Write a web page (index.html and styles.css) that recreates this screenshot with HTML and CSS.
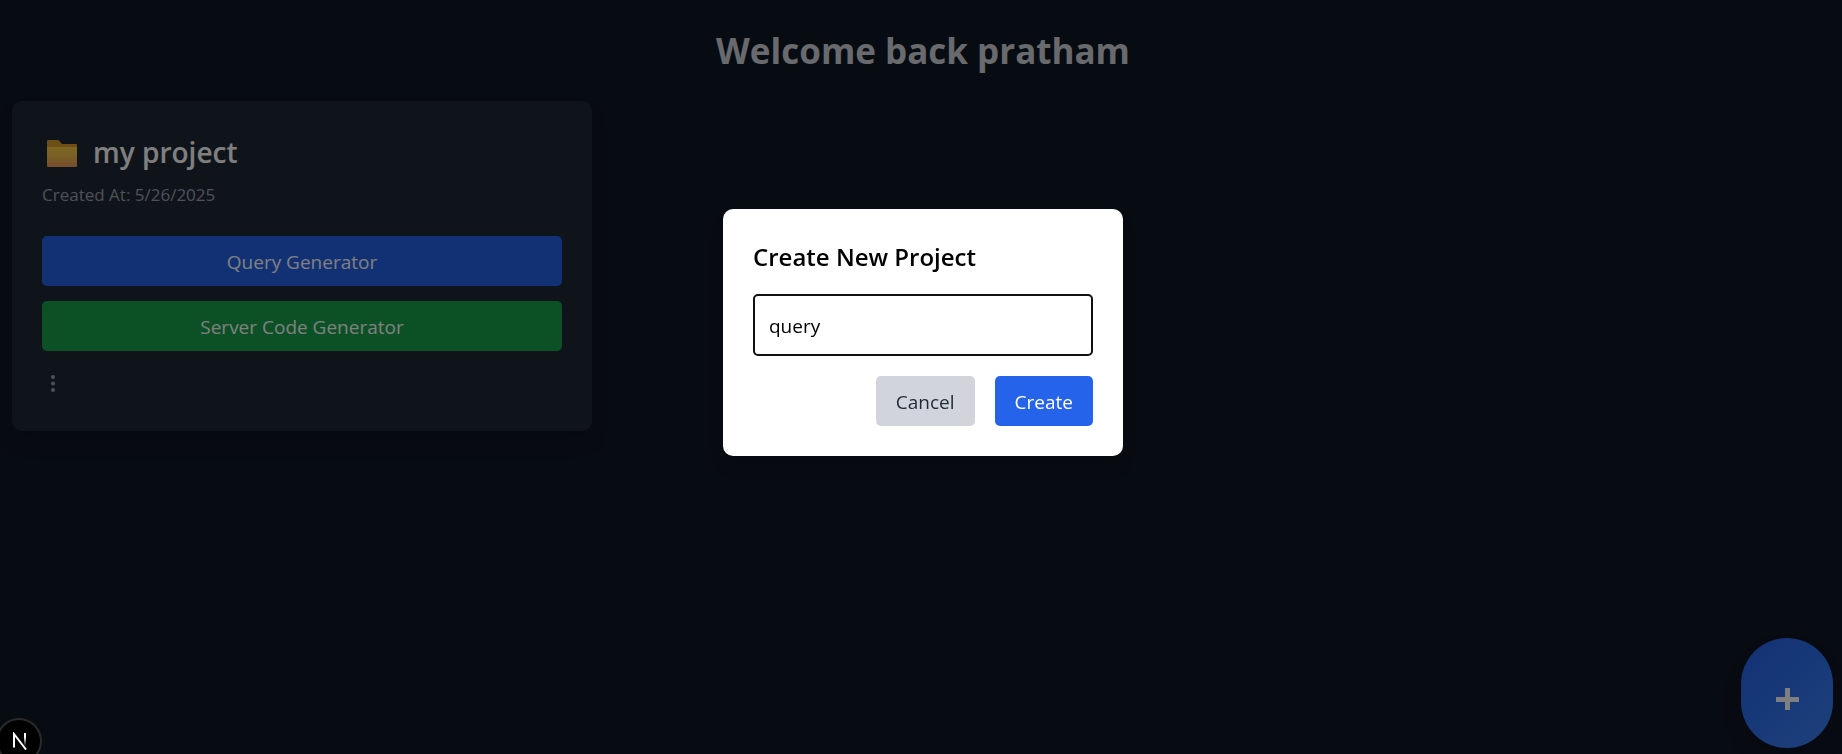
FILE: index.html
```html
<!DOCTYPE html>
<html lang="en">
<head>
<meta charset="utf-8">
<title>Projects</title>
<meta name="viewport" content="width=device-width, initial-scale=1">
<link rel="stylesheet" href="styles.css">
</head>
<body>
<main class="page">
  <h1 class="welcome">Welcome back pratham</h1>
  <section class="projects">
    <article class="card">
      <div class="card-head">
        <svg class="folder" viewBox="0 0 30 27" aria-hidden="true">
          <defs>
            <linearGradient id="folder-front" x1="0" y1="0" x2="0" y2="1">
              <stop offset="0" stop-color="#f7cf45"/>
              <stop offset="0.5" stop-color="#f2bd4c"/>
              <stop offset="1" stop-color="#eb9a62"/>
            </linearGradient>
          </defs>
          <path d="M0 1Q0 0 1 0H10.500Q11.500 0 12.200 .8L15 4H29Q30 4 30 5V26H0Z" fill="#dc9c2e"/>
          <path d="M0 7H30V26Q30 27 29 27H1Q0 27 0 26Z" fill="url(#folder-front)"/>
        </svg>
        <h2 class="card-title">my project</h2>
      </div>
      <p class="created">Created At: 5/26/2025</p>
      <div class="card-actions">
        <button class="btn btn-query" type="button">Query Generator</button>
        <button class="btn btn-server" type="button">Server Code Generator</button>
      </div>
      <button class="more" type="button" aria-label="More options">
        <svg class="dots" viewBox="0 0 4 17" aria-hidden="true"><circle cx="2" cy="2" r="2"/><circle cx="2" cy="8.500" r="2"/><circle cx="2" cy="15" r="2"/></svg>
      </button>
    </article>
  </section>
</main>
<button class="fab" type="button" aria-label="Add project">
  <svg class="plus" viewBox="0 0 23 22" aria-hidden="true"><path d="M0 11.500H23M11.500 0V22"/></svg>
</button>
<div class="overlay">
  <form class="modal" role="dialog" aria-labelledby="modal-title">
    <h2 class="modal-title" id="modal-title">Create New Project</h2>
    <input class="name" type="text" value="query" aria-label="Project name">
    <div class="modal-actions">
      <button class="btn btn-cancel" type="button">Cancel</button>
      <button class="btn btn-create" type="button">Create</button>
    </div>
  </form>
</div>
<button class="dev" type="button" aria-label="Developer tools">
  <svg class="dev-mark" viewBox="0 0 16 18" aria-hidden="true">
    <defs>
      <linearGradient id="fade" x1="0" y1="0" x2="0" y2="1"><stop offset="0.3" stop-color="#fff"/><stop offset="1" stop-color="#fff" stop-opacity="0"/></linearGradient>
    </defs>
    <path d="M2 15.500V2L14 17.500" fill="none" stroke="#fff" stroke-width="2"/>
    <rect x="12" y="1" width="2" height="13" fill="url(#fade)"/>
  </svg>
</button>
</body>
</html>
```
FILE: styles.css
```css
* { box-sizing: border-box; margin: 0; }

body {
  min-height: 100vh;
  background: #0f1724;
  color: #fff;
  font: 20px/30px "Segoe UI", "Open Sans", sans-serif;
}

button, input { font: inherit; color: inherit; border: 0; }

.page { padding: 26px 8px 26px 12px; }

.welcome {
  margin-bottom: 25px;
  color: #d1d5db;
  font-size: 35px;
  line-height: 50px;
  font-weight: 700;
  text-align: center;
}

.projects {
  display: grid;
  grid-template-columns: repeat(3, 1fr);
  gap: 41px;
}

.card {
  padding: 30px;
  border-radius: 10px;
  background: #1f2937;
  box-shadow: 0 12px 18px rgba(0, 0, 0, .1);
}

.card-head { display: flex; align-items: center; gap: 16px; padding-left: 5px; }
.folder { width: 30px; height: 27px; margin-top: 2px; }
.card-title { font-size: 28px; line-height: 42px; font-weight: 600; }
.created { margin-bottom: 26px; padding-top: 7px; color: #9ca3af; font-size: 17px; }

.card-actions { display: grid; gap: 15px; }

.btn { height: 50px; padding: 2px 20px 0; border-radius: 5px; font-size: 19px; }
.btn-query { background: #2563eb; }
.btn-server { background: #16a34a; }
.btn-cancel { background: #d1d5db; color: #1f2937; }
.btn-create { background: #2563eb; color: #fff; }

.more {
  display: flex;
  margin-top: 12px;
  padding: 12px 9px;
  margin-bottom: -3px;
  background: none;
}
.dots { width: 4px; height: 17px; fill: #9ca3af; }

.fab {
  position: fixed;
  right: 9px;
  bottom: 6px;
  display: grid;
  place-items: center;
  width: 92px;
  height: 110px;
  padding-top: 12px;
  border-radius: 46px;
  background: linear-gradient(135deg, #2563eb, #3b82f6);
  box-shadow: 0 12px 20px rgba(0, 0, 0, .1);
}
.plus { width: 23px; height: 22px; fill: none; stroke: #fff; stroke-width: 5; }

.overlay {
  position: fixed;
  inset: 0;
  display: flex;
  align-items: center;
  justify-content: center;
  padding: 0 0 89px 4px;
  background: rgba(0, 0, 0, .5);
}

.modal {
  width: 400px;
  padding: 30px;
  border-radius: 10px;
  background: #fff;
  color: #000;
  box-shadow: 0 12px 18px rgba(0, 0, 0, .1);
}
.modal-title { margin-bottom: 20px; font-size: 24px; line-height: 35px; font-weight: 600; }
.name {
  display: block;
  width: 100%;
  height: 62px;
  margin-bottom: 20px;
  padding: 2px 14px 0;
  border: 2px solid #101010;
  border-radius: 5px;
  background: #fff;
  outline: 0;
  font-size: 19px;
}
.modal-actions { display: flex; justify-content: flex-end; gap: 20px; }

.dev {
  position: fixed;
  left: -4px;
  bottom: -10px;
  display: grid;
  place-items: center;
  width: 46px;
  height: 46px;
  padding: 0 0 0 2px;
  border: 2px solid #2a2a2a;
  border-radius: 50%;
  background: #000;
}
.dev-mark { width: 16px; height: 18px; }
```
